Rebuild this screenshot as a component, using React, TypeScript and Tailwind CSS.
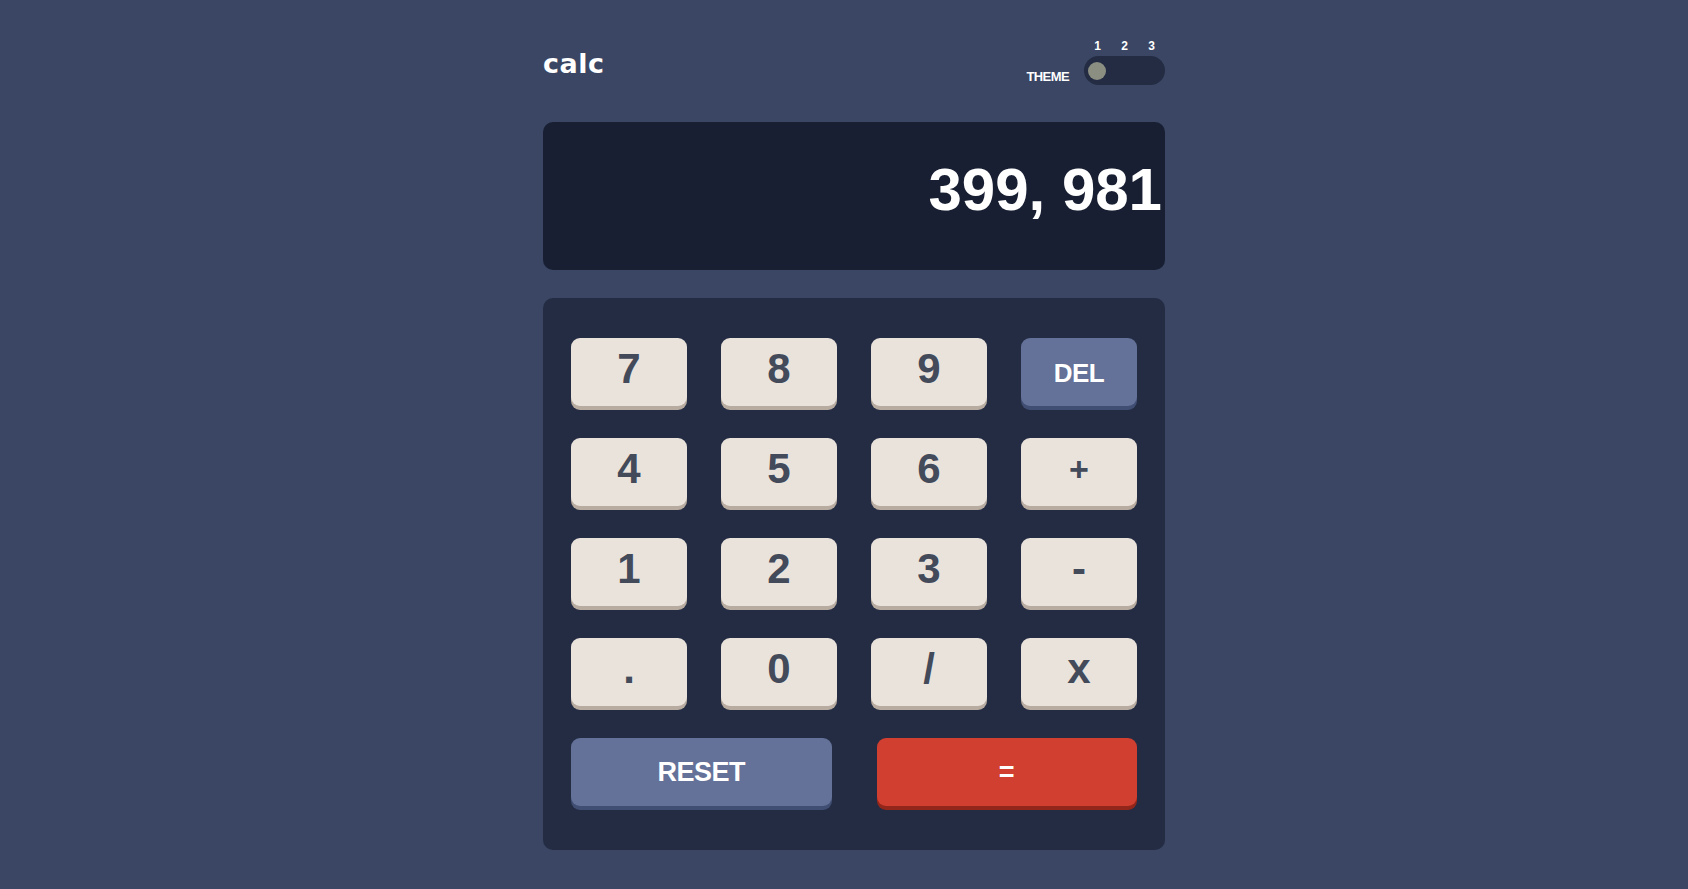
const KEYS = ["7", "8", "9", "DEL", "4", "5", "6", "+", "1", "2", "3", "-", ".", "0", "/", "x"];

function Key({ label }: { label: string }) {
  if (label === "DEL") {
    return (
      <button className="h-[68px] rounded-[9px] bg-[#647198] shadow-[0_4px_0_#414e73] text-white text-[26px] font-bold tracking-[-0.5px] pt-[2px]">
        {label}
      </button>
    );
  }
  // the plus sign is drawn smaller than the digits
  const size = label === "+" ? "text-[34px]" : "text-[42px]";
  return (
    <button
      className={`h-[68px] rounded-[9px] bg-[#eae3dc] shadow-[0_4px_0_#b8aca1] text-[#434a59] ${size} font-bold leading-none pb-[6px]`}
    >
      {label}
    </button>
  );
}

export default function App() {
  return (
    <div
      className="min-h-screen w-full bg-[#3a4663] flex justify-center pl-[20px]"
      style={{ fontFamily: '"Liberation Sans", Arial, sans-serif' }}
    >
      <div className="w-[622px] pt-[39px] pb-[39px]">
        {/* Header */}
        <div className="flex justify-between items-start">
          <div className="mt-[11px] text-white text-[27px] font-bold leading-none tracking-[0.5px] font-['DejaVu_Sans',sans-serif]">
            calc
          </div>
          <div className="flex items-end gap-[15px]">
            <span className="text-white text-[13px] font-bold leading-[13px] tracking-[-0.6px] mb-[2px]">THEME</span>
            <div className="flex flex-col w-[81px]">
              <div className="grid grid-cols-3 h-[14px] text-white text-[12px] font-bold leading-[14px] text-center">
                <span>1</span>
                <span>2</span>
                <span>3</span>
              </div>
              <div className="mt-[3px] h-[29px] rounded-full bg-[#232c43] flex items-center px-[4px]">
                <div className="w-[18px] h-[18px] rounded-full bg-[#8b8f82]" />
              </div>
            </div>
          </div>
        </div>

        {/* Display */}
        <div className="mt-[37px] h-[148px] rounded-[10px] bg-[#181f33] flex justify-end items-start pt-[38px] pr-[3px] overflow-hidden">
          <span className="text-white text-[60px] font-bold leading-none">399, 981</span>
        </div>

        {/* Keypad */}
        <div className="mt-[28px] rounded-[10px] bg-[#232c43] pt-[40px] px-[28px] pb-[44px]">
          <div className="grid grid-cols-4 gap-x-[34px] gap-y-[32px]">
            {KEYS.map((k) => (
              <Key key={k} label={k} />
            ))}
            <div className="col-span-4 flex gap-[45px]">
              <button className="flex-1 h-[68px] rounded-[9px] bg-[#647198] shadow-[0_4px_0_#414e73] text-white text-[27px] font-bold tracking-[-0.5px]">
                RESET
              </button>
              <button className="flex-1 h-[68px] rounded-[9px] bg-[#d03f2f] shadow-[0_4px_0_#93261a] text-white text-[27px] font-bold">
                =
              </button>
            </div>
          </div>
        </div>
      </div>
    </div>
  );
}
